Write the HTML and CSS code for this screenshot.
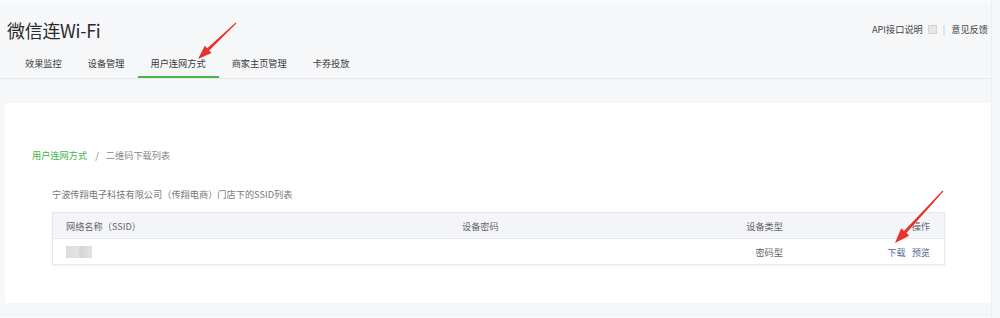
FILE: index.html
```html
<!DOCTYPE html>
<html lang="zh-CN">
<head>
<meta charset="utf-8">
<title>微信连Wi-Fi</title>
<link rel="stylesheet" href="styles.css">
</head>
<body>
<div class="page">
  <header class="header">
    <div class="topbar">
      <h1 class="title">微信连Wi-Fi</h1>
      <div class="links">
        <a class="link">API接口说明</a>
        <span class="checkbox"></span>
        <span class="sep">|</span>
        <a class="link">意见反馈</a>
      </div>
    </div>
    <nav class="tabs">
      <a class="tab">效果监控</a>
      <a class="tab">设备管理</a>
      <a class="tab active">用户连网方式</a>
      <a class="tab">商家主页管理</a>
      <a class="tab">卡券投放</a>
    </nav>
  </header>

  <section class="card">
    <div class="crumbs">
      <a class="crumb-link">用户连网方式</a>
      <span class="crumb-sep">/</span>
      <span class="crumb-cur">二维码下载列表</span>
    </div>
    <div class="list">
      <p class="subtitle">宁波传翔电子科技有限公司（传翔电商）门店下的SSID列表</p>
      <div class="table">
        <div class="row head">
          <div class="cell">网络名称（SSID）</div>
          <div class="cell">设备密码</div>
          <div class="cell right">设备类型</div>
          <div class="cell right last">操作</div>
        </div>
        <div class="row">
          <div class="cell"><span class="blur"></span></div>
          <div class="cell"></div>
          <div class="cell right">密码型</div>
          <div class="cell right last"><a class="op">下载</a><a class="op">预览</a></div>
        </div>
      </div>
    </div>
  </section>
  <div class="footer-line"></div>
</div>

<svg class="arrows" width="1000" height="318" viewBox="0 0 1000 318">
  <polygon fill="#e8322b" points="236.3,23.4 209.2,50.5 211.6,53.0 198,59 204.8,45.8 207.2,48.3 235.7,22.6"/>
  <polygon fill="#e8322b" points="943.4,191.4 906.4,233.1 909.2,235.7 895,243 901.2,228.3 904.0,230.9 942.6,190.6"/>
</svg>
</body>
</html>
```

FILE: styles.css
```css
html, body {
  margin: 0;
  padding: 0;
}
body {
  background: #f6f7f9;
  font-family: "Noto Sans CJK SC", "Microsoft YaHei", sans-serif;
  color: #333;
  width: 1000px;
  height: 318px;
  overflow: hidden;
  position: relative;
}
.page {
  width: 992px;
  height: 318px;
  border-right: 1px solid #eceef1;
  box-sizing: border-box;
}
.header {
  border-bottom: 1px solid #e6e8eb;
  border-top: 3px solid #fafbfc;
}
.topbar {
  display: flex;
  justify-content: space-between;
  align-items: center;
  padding: 13px 3px 0 7px;
  height: 28px;
}
.title {
  margin: 0;
  font-size: 18px;
  font-weight: normal;
  line-height: 28px;
  color: #2a2a2a;
  letter-spacing: -0.3px;
}
.links {
  display: flex;
  align-items: center;
  font-size: 9.2px;
  color: #444;
  margin-top: -2px;
}
.link {
  color: #444;
}
.checkbox {
  width: 7px;
  height: 7px;
  border: 1px solid #cfd1d4;
  background: #e6e7e9;
  margin-left: 5px;
}
.sep {
  color: #bbb;
  margin: 0 6px 0 6px;
}
.tabs {
  display: flex;
  padding: 6px 0 0 12px;
}
.tab {
  padding: 0 13px;
  height: 26px;
  line-height: 26px;
  font-size: 9.2px;
  color: #3a3a3a;
  border-bottom: 2px solid transparent;
}
.tab.active {
  border-bottom-color: #44b549;
}
.card {
  margin: 24px 0 0 5px;
  width: 986px;
  height: 200px;
  background: #fff;
  box-sizing: border-box;
  padding-top: 44px;
}
.crumbs {
  padding-left: 27px;
  font-size: 9.2px;
  line-height: 16px;
  color: #888;
}
.crumb-link {
  color: #44b549;
}
.crumb-sep {
  margin: 0 5px 0 6px;
  color: #888;
}
.list {
  padding: 23px 46px 0 47px;
}
.subtitle {
  margin: 0 0 10px;
  font-size: 9.2px;
  line-height: 16px;
  color: #777;
}
.table {
  border: 1px solid #e7e8eb;
  box-shadow: 0 1px 3px rgba(0, 0, 0, 0.05);
}
.row {
  display: grid;
  grid-template-columns: 396px 172px 175px 148px;
  height: 25px;
  align-items: center;
  font-size: 9.2px;
  color: #666;
}
.row.head {
  background: #f4f5f9;
  border-bottom: 1px solid #e7e8eb;
}
.cell {
  padding: 0 13px;
  white-space: nowrap;
}
.cell.right {
  text-align: right;
}
.cell.last {
  padding-right: 14px;
}
.blur {
  display: block;
  width: 26px;
  height: 12px;
  background: linear-gradient(90deg, #dcdcdc 0%, #e4e4e4 45%, #d6d6d6 55%, #e2e2e2 100%);
  filter: blur(0.6px);
}
.op {
  color: #576b95;
  margin-left: 6px;
}
.footer-line {
  margin-top: 11px;
  height: 1px;
  background: #eef0f2;
}
.arrows {
  position: absolute;
  left: 0;
  top: 0;
  pointer-events: none;
}
```
